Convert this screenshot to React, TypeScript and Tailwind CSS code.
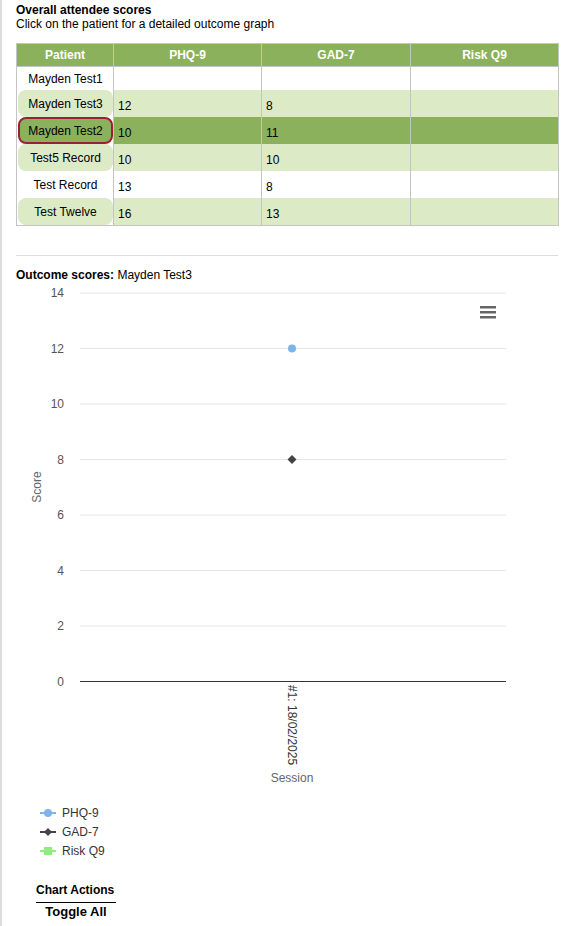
import React from 'react'

type Row = { name: string; phq?: number; gad?: number }

const rows: Row[] = [
  { name: 'Mayden Test1' },
  { name: 'Mayden Test3', phq: 12, gad: 8 },
  { name: 'Mayden Test2', phq: 10, gad: 11 },
  { name: 'Test5 Record', phq: 10, gad: 10 },
  { name: 'Test Record', phq: 13, gad: 8 },
  { name: 'Test Twelve', phq: 16, gad: 13 },
]

const SELECTED = 2

function ScoresTable() {
  return (
    <table className="border-collapse border border-[#c4c4c4] text-[12px] text-black w-[542px] table-fixed">
      <colgroup>
        <col className="w-[97px]" />
        <col className="w-[148px]" />
        <col className="w-[149px]" />
        <col className="w-[148px]" />
      </colgroup>
      <thead>
        <tr className="bg-[#8bb15c] text-white font-bold h-[23px]">
          <th className="border border-[#c4c4c4] font-bold">Patient</th>
          <th className="border border-[#c4c4c4] font-bold">PHQ-9</th>
          <th className="border border-[#c4c4c4] font-bold">GAD-7</th>
          <th className="border border-[#c4c4c4] font-bold">Risk Q9</th>
        </tr>
      </thead>
      <tbody>
        {rows.map((r, i) => {
          const selected = i === SELECTED
          const striped = i % 2 === 1
          const rowBg = selected ? 'bg-[#8bb15c]' : striped ? 'bg-[#dceac6]' : 'bg-white'
          const h = i === 0 ? 'h-[23px]' : 'h-[27px]'
          return (
            <tr key={r.name} className={h}>
              <td className="border-r border-[#c4c4c4] bg-white p-0 pl-px">
                <button
                  className={`w-full ${h} flex items-center justify-center rounded-[8px] ${
                    selected
                      ? 'bg-[#8bb15c] border-2 border-[#9c1f3a]'
                      : striped
                        ? 'bg-[#dceac6]'
                        : 'bg-white'
                  }`}
                >
                  {r.name}
                </button>
              </td>
              <td className={`border-r border-[#c4c4c4] ${rowBg} pl-[4px] pt-[4px]`}>{r.phq ?? ''}</td>
              <td className={`border-r border-[#c4c4c4] ${rowBg} pl-[4px] pt-[4px]`}>{r.gad ?? ''}</td>
              <td className={`${rowBg}`}></td>
            </tr>
          )
        })}
      </tbody>
    </table>
  )
}

const ticks = [14, 12, 10, 8, 6, 4, 2, 0]
const yOf = (v: number) => 396.5 - v * 27.75

function OutcomeChart() {
  return (
    <svg width={542} height={575} className="block" style={{ fontFamily: '"Liberation Sans", Arial, sans-serif' }}>
      {ticks.map((t) => (
        <g key={t}>
          {t !== 0 && (
            <line x1={64} x2={490} y1={yOf(t)} y2={yOf(t)} stroke="#e6e6e6" strokeWidth={1} />
          )}
          <text x={48} y={yOf(t) + 4} textAnchor="end" fontSize={12} fill="#555">
            {t}
          </text>
        </g>
      ))}
      <line x1={64} x2={490} y1={396.5} y2={396.5} stroke="#333" strokeWidth={1} />

      <text
        transform="translate(25 202) rotate(-90)"
        textAnchor="middle"
        fontSize={12}
        fill="#666"
      >
        Score
      </text>

      {/* context menu */}
      <g fill="#666">
        <rect x={464} y={21} width={16} height={2.5} />
        <rect x={464} y={26} width={16} height={2.5} />
        <rect x={464} y={31} width={16} height={2.5} />
      </g>

      {/* points */}
      <circle cx={276} cy={yOf(12)} r={4} fill="#7cb5ec" />
      <path d={`M276 ${yOf(8) - 4.5} L280.5 ${yOf(8)} L276 ${yOf(8) + 4.5} L271.5 ${yOf(8)} Z`} fill="#434348" />

      <text transform="translate(276 400) rotate(90)" y={4} fontSize={12} fill="#333">
        #1: 18/02/2025
      </text>
      <text x={276} y={497} textAnchor="middle" fontSize={12} fill="#666">
        Session
      </text>

      {/* legend */}
      <g>
        <line x1={24} x2={40} y1={528} y2={528} stroke="#7cb5ec" strokeWidth={2} />
        <circle cx={32} cy={528} r={4} fill="#7cb5ec" />
        <text x={46} y={532} fontSize={12} fill="#333">PHQ-9</text>

        <line x1={24} x2={40} y1={547} y2={547} stroke="#434348" strokeWidth={2} />
        <path d="M32 543 L36 547 L32 551 L28 547 Z" fill="#434348" />
        <text x={46} y={551} fontSize={12} fill="#333">GAD-7</text>

        <line x1={24} x2={40} y1={566} y2={566} stroke="#90ed7d" strokeWidth={2} />
        <rect x={28} y={562} width={8} height={8} fill="#90ed7d" />
        <text x={46} y={570} fontSize={12} fill="#333">Risk Q9</text>
      </g>
    </svg>
  )
}

export default function App() {
  return (
    <div
      className="min-h-[926px] bg-white border-l-2 border-[#dcdcdc] pl-[14px] pt-[3px] text-black"
      style={{ fontFamily: '"Liberation Sans", Arial, sans-serif' }}
    >
      <div className="text-[12px] leading-[14px]">
        <div className="font-bold">Overall attendee scores</div>
        <div>Click on the patient for a detailed outcome graph</div>
      </div>

      <div className="mt-[12px]">
        <ScoresTable />
      </div>

      <div className="mt-[29px] w-[542px] h-px bg-[#dddddd]" />

      <div className="mt-[12px] text-[12px] leading-[14px]">
        <span className="font-bold">Outcome scores:</span> Mayden Test3
      </div>

      <div className="mt-[3px]">
        <OutcomeChart />
      </div>

      <div className="mt-[23px] ml-[20px] w-[80px]">
        <div className="text-[12px] leading-[14px] font-bold whitespace-nowrap border-b border-black pb-[5px]">Chart Actions</div>
        <div className="text-[13px] leading-[18px] font-bold text-center whitespace-nowrap">Toggle All</div>
      </div>
    </div>
  )
}
